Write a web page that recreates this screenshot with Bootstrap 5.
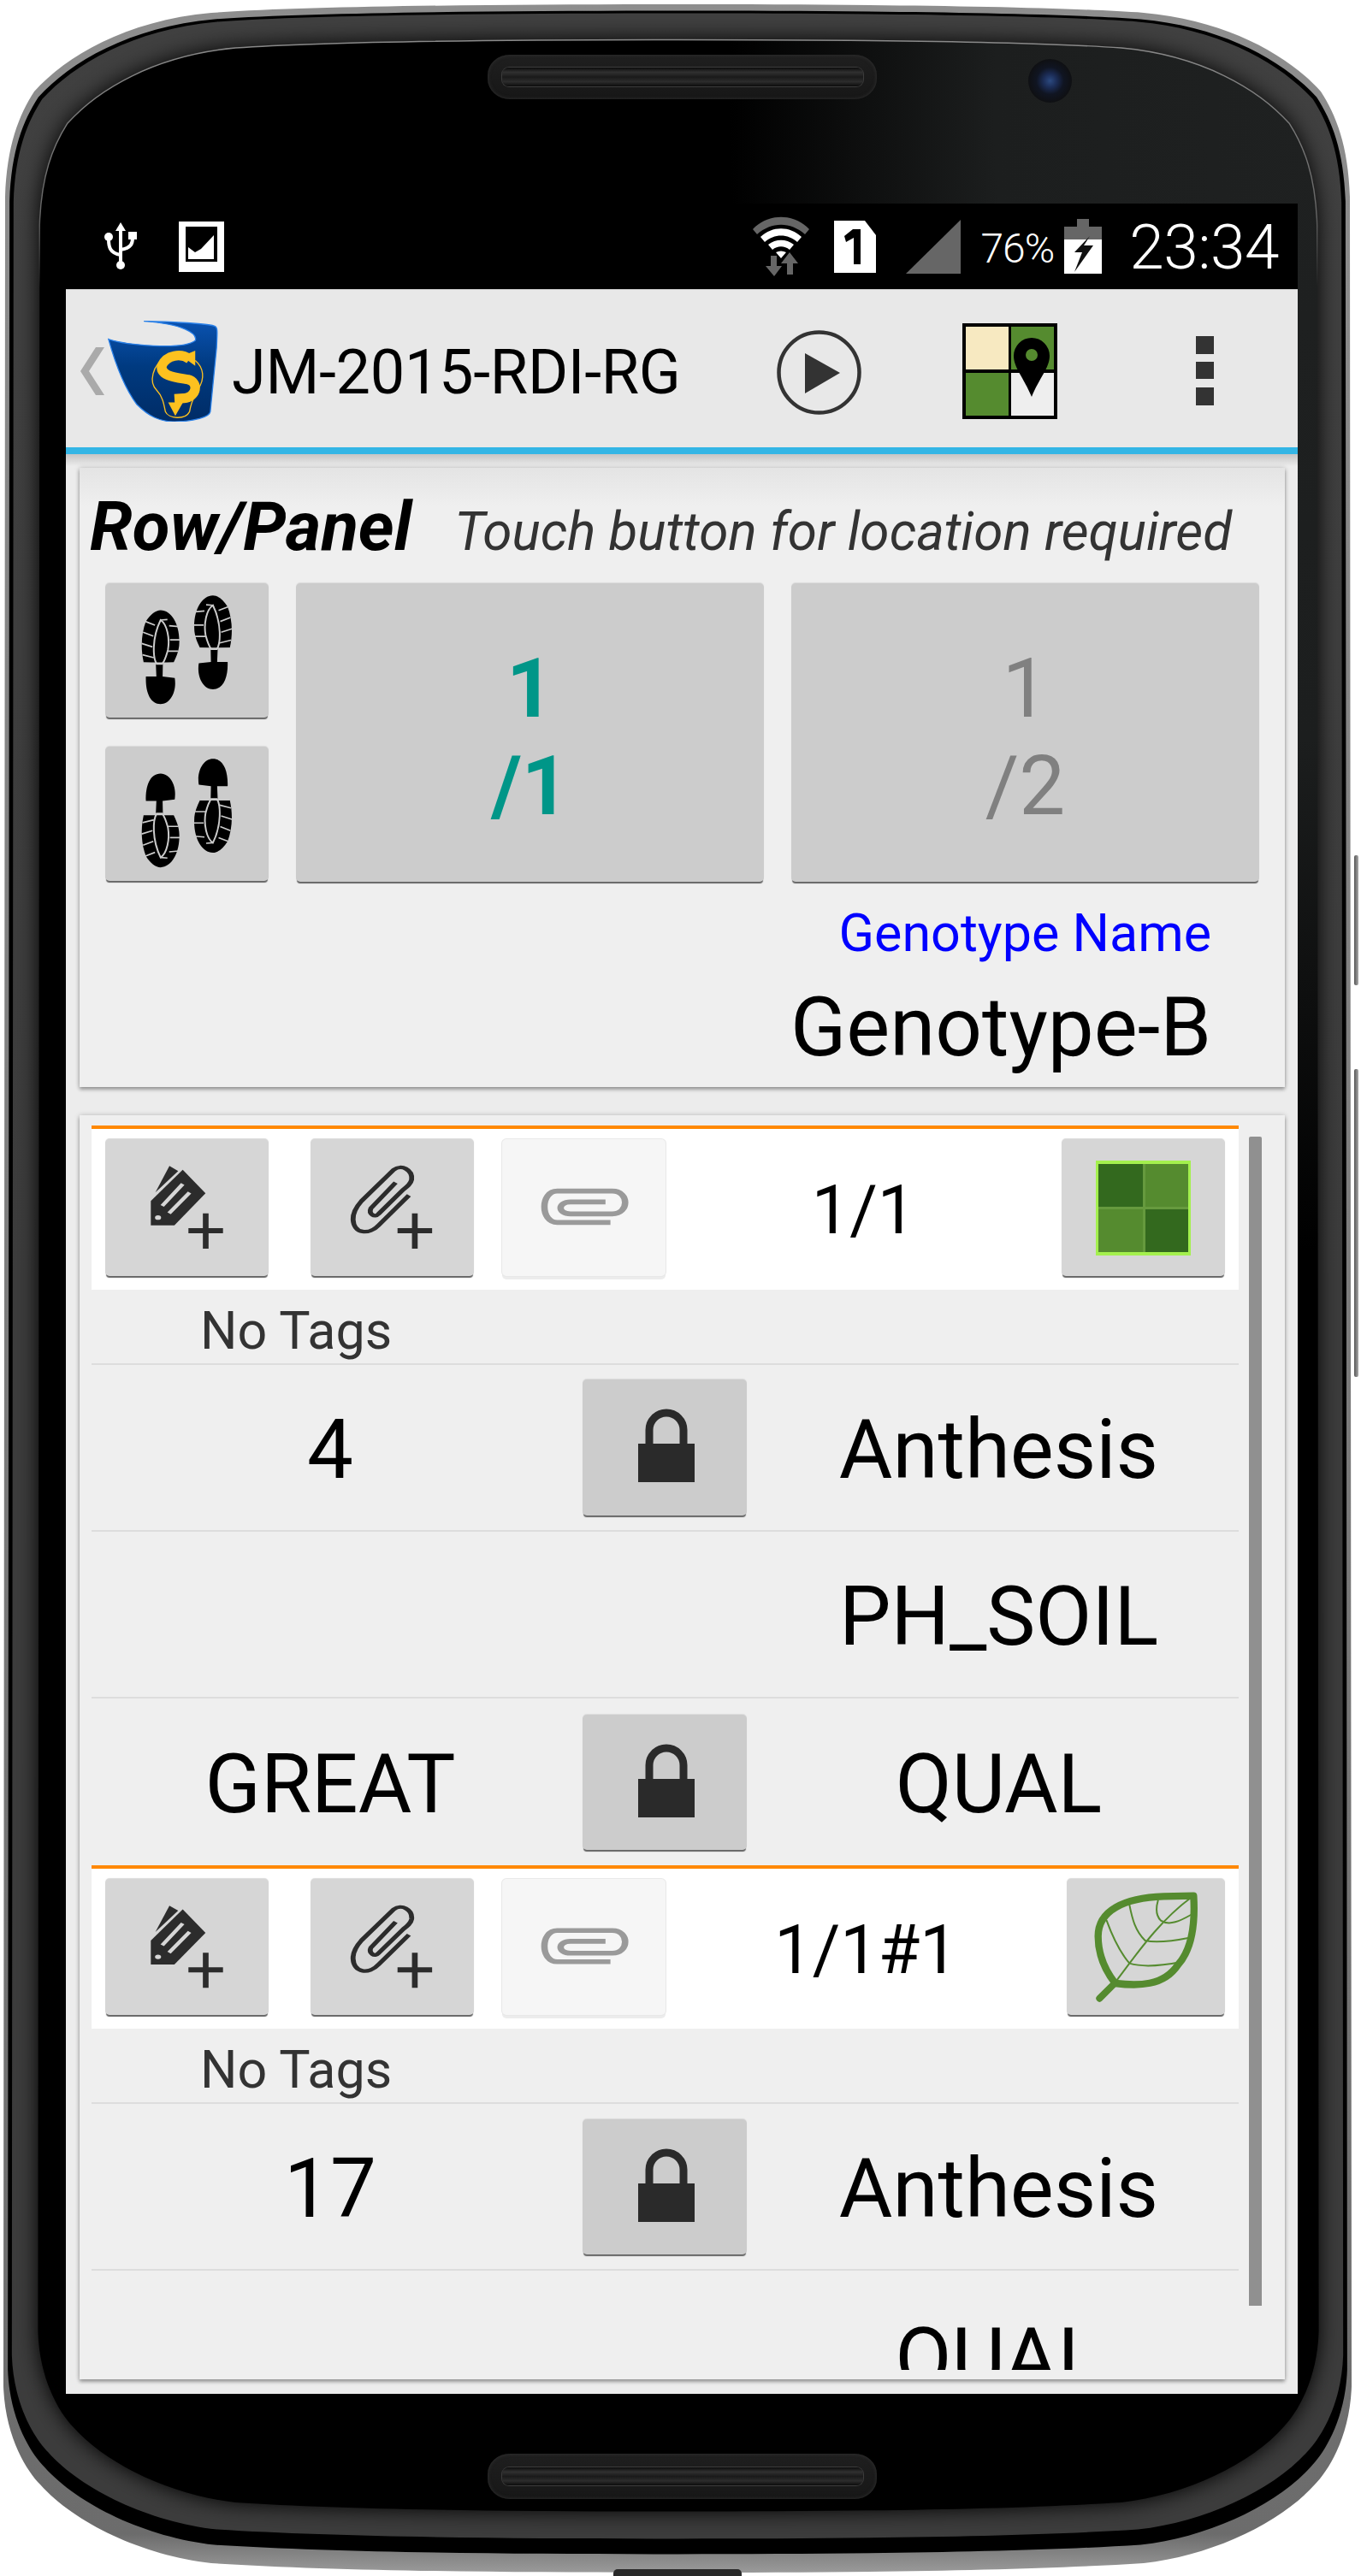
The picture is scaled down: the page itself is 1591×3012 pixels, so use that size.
<!DOCTYPE html>
<html lang="en"><head><meta charset="utf-8"><title>Field book</title>
<link href="https://cdn.jsdelivr.net/npm/bootstrap@5.3.0/dist/css/bootstrap.min.css" rel="stylesheet">
<style>
html,body{margin:0;background:#fff;}
body{font-family:Roboto,"Liberation Sans",sans-serif;width:1591px;height:3012px;overflow:hidden;}
.phone{position:relative;width:1591px;height:3012px;padding:238px 0 0 77px;}
.frame{position:absolute;left:0;top:0;}
.spk{position:absolute;left:570px;width:455px;border-radius:26px/24px;background:linear-gradient(#1f1f1f,#171717);box-shadow:inset 0 0 4px #333;display:flex;align-items:center;justify-content:center;}
.spk i{display:block;border-radius:8px;background:linear-gradient(#0c0c0c,#303030 25%,#1a1a1a 50%,#2c2c2c 75%,#0c0c0c);box-shadow:0 0 0 1px #3c3c3c;}
.spk-t{top:64px;height:52px;}.spk-t i{width:422px;height:22px;}
.spk-b{top:2869px;height:53px;}.spk-b i{width:422px;height:21px;}
.cam{position:absolute;left:1202px;top:69px;width:51px;height:51px;border-radius:50%;background:radial-gradient(circle,#2c4a80 0,#1b2c55 22%,#101522 44%,#0f1013 70%,#0b0b0b);}
.sidebtn{position:absolute;left:1583px;width:5px;background:linear-gradient(90deg,#555,#aaa);border-radius:2px;}
.vol{top:1000px;height:152px;}.pow{top:1250px;height:360px;}
.notch{position:absolute;left:717px;top:3004px;width:150px;height:8px;background:#2a2a2a;border-radius:5px 5px 0 0;}
.screen{position:relative;width:1440px;height:2561px;background:#000;display:flex;flex-direction:column;overflow:hidden;}
.status{height:100px;flex:none;color:#fff;display:flex;align-items:center;padding:0 22px 0 43px;}
.pct{font-size:48px;letter-spacing:-1px;line-height:1;margin:5px 12px 0 23px;font-weight:300;}
.clock{font-size:73px;line-height:1;margin-left:32px;margin-top:2px;letter-spacing:-.5px;font-weight:300;}
.abar{height:185px;flex:none;background:#e8e8e8;border-top:1px solid #ccc;display:flex;align-items:center;padding:5px 0 0 17px;}
.atitle{font-size:72px;line-height:1;color:#000;margin-left:16px;margin-top:4px;letter-spacing:-.3px;}
.bluebar{height:8px;flex:none;background:#33b5e5;}
.content{flex:1;background:linear-gradient(#c4c4c4,#ececec 14px);padding:16px 15px 0 16px;min-height:0;display:flex;flex-direction:column;}
.panel{background:#efefef;box-shadow:0 3px 4px rgba(0,0,0,.3),0 0 6px rgba(0,0,0,.2);}
.panel-a{height:724px;flex:none;padding:0 30px;background:linear-gradient(#e4e4e4,#efefef 45px);}
.panel-b{margin-top:33px;height:1478px;flex:none;position:relative;padding:12px 0 11px 14px;}
.hrow{height:135px;display:flex;align-items:baseline;margin-left:-18px;white-space:nowrap;padding-top:29px;}
.htitle{font-size:80px;font-weight:700;font-style:italic;color:#000;line-height:1;}
.hnote{font-size:62px;font-style:italic;color:#333;margin-left:50px;line-height:1;}
.tbtn.btn{background:#ccc;border:0;border-radius:5px;box-shadow:0 3px 1px -1px #666,0 -1px 1px #dadada;display:flex;align-items:center;justify-content:center;padding:0;flex:none;color:inherit;}
.tbtn.lite{background:#d6d6d6;}
.tbtn.faint{background:#f6f6f6;box-shadow:0 0 0 1px #e8e8e8,0 4px 0 0 #ececec;}
.sq{width:191px;height:157px;}
.stack{display:flex;flex-direction:column;gap:34px;width:191px;flex:none;}
.blk{display:flex;gap:32px;}
.tbtn.big{width:547px;height:349px;font-size:96px;line-height:114px;text-align:center;flex-direction:column;padding-top:10px;}
.big-on{color:#009688!important;font-weight:700;}
.big-off{color:#808080!important;}
.lblw{margin-top:25px;text-align:right;padding-right:56px;font-size:61px;color:#00f;line-height:70px;}
.genw{margin-top:20px;text-align:right;padding-right:56px;font-size:96px;color:#000;line-height:110px;}
.listw{width:1341px;height:1455px;overflow:hidden;}
.orange{height:4px;background:#f80;}
.whitebar{height:188px;background:#fff;display:flex;align-items:flex-start;padding:12px 16px 0;}
.wb2{height:187px;}
.whitebar .tbtn{height:160px;}
.wb2 .tbtn{height:159px;}
.w191{width:191px;}
.ml48{margin-left:49px;}.ml33{margin-left:33px;}
.w185{width:185px;}
.idt{font-size:79px;line-height:1;color:#000;flex:1;text-align:center;margin-top:44px;}
.tags{height:88px;font-size:61px;line-height:70px;color:#333;padding:13px 0 0 127px;border-bottom:2px solid #ddd;}
.rowx{border-bottom:2px solid #ddd;display:flex;align-items:center;font-size:96px;color:#000;line-height:1;}
.rowx .val{width:574px;text-align:center;padding:4px 16px 0 0;}
.rowx .tbtn{width:192px;}
.rowx .w191{width:192px;}
.rowx .nm{flex:1;text-align:center;padding:4px 0 0 14px;}
.r1{height:195px;}.r3{height:195px;border-bottom:0;}.r4{height:195px;}.r5{height:200px;border-bottom:0;}
.h159{height:159px;}.h158{height:158px;}
.sbar{position:absolute;left:1367px;top:25px;width:15px;height:1367px;background:#909090;border-radius:2px 2px 0 0;}
</style></head><body>
<div class="phone">
<svg class="frame" width="1591" height="3012" viewBox="0 0 1591 3012">
<defs>
<path id="body" d="M0,-1501 C205,-1501 435,-1499 545,-1491 C645,-1482 715,-1440 752,-1399 C770,-1371 784,-1336 786,-1276 L788,1284 C786,1344 760,1384 745,1399 C705,1444 625,1482 545,1491 C405,1500 205,1502 0,1502 C-205,1502 -405,1500 -545,1491 C-625,1482 -705,1444 -745,1399 C-760,1384 -786,1344 -788,1284 L-786,-1276 C-784,-1336 -770,-1371 -752,-1399 C-715,-1440 -645,-1482 -545,-1491 C-435,-1499 -205,-1501 0,-1501Z"/>
<linearGradient id="rim" x1="0" y1="0" x2="0" y2="1"><stop offset="0" stop-color="#8e8e8e"/><stop offset=".985" stop-color="#6c6c6c"/><stop offset="1" stop-color="#9a9a9a"/></linearGradient>
<linearGradient id="band" x1="0" y1="0" x2="0" y2="1"><stop offset="0" stop-color="#404040"/><stop offset=".5" stop-color="#3c3c3c"/><stop offset="1" stop-color="#3c3c3c"/></linearGradient>
<radialGradient id="face" cx="1" cy=".03" r=".46"><stop offset="0" stop-color="#1f2121"/><stop offset=".55" stop-color="#1c1e1e"/><stop offset="1" stop-color="#000"/></radialGradient>
<linearGradient id="fline" x1="0" y1="0" x2="0" y2="1"><stop offset="0" stop-color="#8a8a8a"/><stop offset=".07" stop-color="#666"/><stop offset=".1" stop-color="#666" stop-opacity="0"/></linearGradient>
<filter id="blr" x="-5%" y="-5%" width="110%" height="110%"><feGaussianBlur stdDeviation="13"/></filter>
</defs>
<use href="#body" fill="url(#rim)" transform="translate(792,1506)"/>
<use href="#body" fill="#000" transform="translate(792,1499) scale(.9935,.9903)"/>
<use href="#body" fill="url(#band)" transform="translate(792,1491.5) scale(.9875,.9833)"/>
<use href="#body" fill="#000" filter="url(#blr)" transform="translate(793,1491) scale(.95,.9624)"/>
<use href="#body" fill="url(#face)" stroke="url(#fline)" stroke-width="1.5" transform="translate(793,1491) scale(.95,.9624)"/>
</svg>
<div class="spk spk-t"><i></i></div><div class="cam"></div>
<div class="spk spk-b"><i></i></div>
<div class="sidebtn vol"></div><div class="sidebtn pow"></div><div class="notch"></div>

<div class="screen">
 <div class="status">
  <svg width="42" height="56" viewBox="0 0 42 56"><g fill="none" stroke="#fff" stroke-width="4"><path d="M21 8V50M21 38C8 36 7 28 7 20M21 32C34 30 35 24 35 18"/></g><path d="M21 0l6 10H15z" fill="#fff"/><circle cx="7" cy="17" r="5" fill="#fff"/><rect x="30" y="11" width="10" height="9" fill="#fff"/><circle cx="21" cy="50" r="5" fill="#fff"/></svg>
  <svg style="margin-left:47px" width="53" height="59" viewBox="0 0 53 59"><rect width="53" height="59" fill="#fff"/><rect x="8" y="6" width="37" height="41" fill="#000"/><path d="M11 44V30l8 6 7-4 15-16v28z" fill="#fff"/></svg>
  <div class="flex-grow-1"></div>
  <svg width="66" height="70" viewBox="0 0 66 70"><path d="M0 15C18-4 48-4 66 15l-5 6C44 6 22 6 5 21z" fill="#666"/><path d="M9 24c14-13 34-13 48 0l-5 6c-11-10-27-10-38 0zM18 33c9-7 21-7 30 0l-5 6c-6-5-14-5-20 0zM27 42c4-2 8-2 12 0l-6 7z" fill="#fff"/><path d="M21 46h7v12h6L25 70 15 58h6z" fill="#666"/><path d="M43 42l10 13h-6v13h-7V55h-7z" fill="#666"/></svg>
  <svg style="margin-left:29px" width="49" height="61" viewBox="0 0 49 61"><path d="M0 0h36l13 17v44H0z" fill="#fff"/><path d="M12 18l10-8h9v41h-8V20l-9 5z" fill="#000"/></svg>
  <svg style="margin-left:35px" width="64" height="63" viewBox="0 0 64 63"><path d="M64 0v63H0z" fill="#666"/></svg>
  <span class="pct">76%</span>
  <svg width="44" height="64" viewBox="0 0 44 64"><path d="M15 0h14v9h15v55H0V9h15z" fill="#666"/><path d="M0 24h44v40H0z" fill="#fff"/><path d="M30 20 12 39h9l-9 23 22-31H23l7-11z" fill="#111"/></svg>
  <span class="clock">23:34</span>
 </div>
 <div class="abar">
  <svg width="28" height="56" viewBox="0 0 28 56"><path d="M28 0 10 28l18 28H18L0 28 18 0z" fill="#aaa"/></svg>
  <svg style="margin-left:4px" width="129" height="118" viewBox="138 105 387 355">
   <defs><linearGradient id="cup" x1="0" y1="0" x2="0" y2="1"><stop offset="0" stop-color="#0a52b0"/><stop offset=".45" stop-color="#003a80"/><stop offset="1" stop-color="#002c66"/></linearGradient></defs>
   <path d="M140 170C200 190 400 210 445 175C455 150 400 115 265 107C350 108 500 115 515 125C525 130 522 150 520 200L498 425C495 445 440 458 380 460C320 462 280 440 240 400C195 340 165 260 140 170Z" fill="url(#cup)" stroke="#2a80e8" stroke-width="4"/>
   <g fill="none" stroke="#fdc11f"><path d="M340 238C295 260 280 320 310 350C330 370 335 400 340 425C350 450 410 455 425 425C430 390 440 375 455 345C480 310 475 270 445 245" stroke-width="4"/><path d="M425 240C395 218 345 225 328 262C318 300 380 305 420 312C458 322 452 372 405 378L372 380" stroke-width="34"/></g>
   <path d="M398 230 445 210V264zM350 392H402L375 440z" fill="#fdc11f"/>
  </svg>
  <span class="atitle">JM-2015-RDI-RG</span>
  <svg style="margin-left:112px;margin-top:3px" width="99" height="99" viewBox="0 0 99 99"><circle cx="49.5" cy="49.5" r="47" fill="none" stroke="#333" stroke-width="4.5"/><path d="M33 27 74 50 33 74z" fill="#333"/></svg>
  <svg style="margin-left:118px" width="111" height="112" viewBox="0 0 111 112"><rect width="111" height="112" fill="#000"/><rect x="4" y="4" width="50" height="50" fill="#f7e9c1"/><rect x="57" y="4" width="50" height="50" fill="#558b2f"/><rect x="4" y="58" width="50" height="50" fill="#558b2f"/><rect x="57" y="58" width="50" height="50" fill="#eee"/><path d="M81 86C72 64 60 52 60 38a21 21 0 0 1 42 0C102 52 90 64 81 86Z" fill="#000"/><circle cx="81" cy="37" r="7" fill="#558b2f"/></svg>
  <svg style="margin-left:162px" width="21" height="81" viewBox="0 0 21 81"><path d="M0 0h21v21H0zM0 30h21v20H0zM0 60h21v21H0z" fill="#333"/></svg>
 </div>
 <div class="bluebar"></div>
 <div class="content">
  <div class="card rounded-0 border-0 panel panel-a">
   <div class="hrow"><span class="htitle">Row/Panel</span><span class="hnote">Touch button for location required</span></div>
   <div class="blk">
    <div class="stack">
     <button class="btn tbtn sq"><svg width="191" height="157" viewBox="38 5 574 475">
      <defs><g id="shoe">
       <path d="M232 100C270 100 300 150 298 215C298 245 285 270 278 285L240 287 239 335 282 340C290 390 265 432 232 432C195 432 178 390 180 335L217 335 215 287 172 285C160 230 165 180 180 140C195 115 215 100 232 100Z" fill="#000"/>
       <path d="M232 135C255 150 265 200 258 240C250 270 242 285 238 290H218C205 270 200 200 232 135Z" fill="#000" stroke="#ccc" stroke-width="6"/>
       <path d="M178 140 212 153M170 178 206 192M165 218 203 230M168 258 208 268M256 133 232 135M262 155 296 158M265 205 300 205M258 245 295 245M172 287H278" stroke="#ccc" stroke-width="5" fill="none"/>
      </g></defs>
      <use href="#shoe"/><use href="#shoe" transform="translate(649,-52) scale(-1,1)"/></svg></button>
     <button class="btn tbtn sq"><svg width="191" height="157" viewBox="38 5 574 475">
      <use href="#shoe" transform="translate(0,532) scale(1,-1)"/><use href="#shoe" transform="translate(649,480) scale(-1,-1)"/></svg></button>
    </div>
    <button class="btn tbtn big big-on"><span>1</span><span>/1</span></button>
    <button class="btn tbtn big big-off"><span>1</span><span>/2</span></button>
   </div>
   <div class="lblw">Genotype Name</div>
   <div class="genw">Genotype-B</div>
  </div>
  <div class="card rounded-0 border-0 panel panel-b">
   <div class="listw">
    <div class="orange"></div>
    <div class="whitebar">
     <button class="btn tbtn lite w191"><svg width="191" height="160" viewBox="28 38 430 480" preserveAspectRatio="none"><use href="#tagic"/></svg></button>
     <button class="btn tbtn lite w191 ml48"><svg width="191" height="160" viewBox="28 38 430 480" preserveAspectRatio="none"><use href="#clipic"/></svg></button>
     <button class="btn tbtn faint w191 ml33"><svg width="191" height="160" viewBox="1070 38 430 480" preserveAspectRatio="none"><use href="#filic"/></svg></button>
     <span class="idt">1/1</span>
     <button class="btn tbtn lite w191"><svg width="111" height="111" viewBox="0 0 111 111"><rect width="111" height="111" fill="#a4f04e"/><rect x="3" y="4" width="52" height="50" fill="#33691e"/><rect x="58" y="4" width="50" height="50" fill="#558b2f"/><rect x="3" y="57" width="52" height="50" fill="#558b2f"/><rect x="58" y="57" width="50" height="50" fill="#33691e"/><path d="M55 4h3v103h-3zM3 54h105v3H3z" fill="#669a3e"/></svg></button>
    </div>
    <div class="tags">No Tags</div>
    <div class="rowx r1"><div class="val">4</div><button class="btn tbtn h159"><svg width="191" height="159" viewBox="0 0 191 159"><use href="#lockic"/></svg></button><div class="nm">Anthesis</div></div>
    <div class="rowx r1"><div class="val"></div><div class="w191"></div><div class="nm">PH_SOIL</div></div>
    <div class="rowx r3"><div class="val">GREAT</div><button class="btn tbtn h158"><svg width="191" height="158" viewBox="0 0 191 158"><use href="#lockic"/></svg></button><div class="nm">QUAL</div></div>
    <div class="orange"></div>
    <div class="whitebar wb2">
     <button class="btn tbtn lite w191"><svg width="191" height="159" viewBox="28 38 430 480" preserveAspectRatio="none"><use href="#tagic"/></svg></button>
     <button class="btn tbtn lite w191 ml48"><svg width="191" height="159" viewBox="28 38 430 480" preserveAspectRatio="none"><use href="#clipic"/></svg></button>
     <button class="btn tbtn faint w191 ml33"><svg width="191" height="159" viewBox="1070 38 430 480" preserveAspectRatio="none"><use href="#filic"/></svg></button>
     <span class="idt">1/1#1</span>
     <button class="btn tbtn lite w185"><svg width="185" height="159" viewBox="80 20 555 475"><g fill="none" stroke="#558b2f" stroke-linecap="round" stroke-linejoin="round"><path d="M250 385C215 340 190 290 190 220C190 130 280 85 420 80L525 78C530 160 525 260 470 320C420 395 330 395 250 385Z" stroke-width="25"/><path d="M195 438 245 388" stroke-width="24"/><path d="M255 375C320 290 400 170 515 85M220 165C240 220 270 280 300 315C350 330 430 320 480 310M300 110C310 160 320 200 355 235C400 245 460 235 510 225M400 95C390 130 395 150 410 165C440 185 480 165 515 145" stroke-width="6"/></g></svg></button>
    </div>
    <div class="tags">No Tags</div>
    <div class="rowx r4"><div class="val">17</div><button class="btn tbtn h158"><svg width="191" height="158" viewBox="0 0 191 158"><use href="#lockic"/></svg></button><div class="nm">Anthesis</div></div>
    <div class="rowx r5"><div class="val"></div><div class="w191"></div><div class="nm">QUAL</div></div>
   </div>
   <div class="sbar"></div>
   <svg width="0" height="0" class="position-absolute"><defs>
    <g id="lockic"><path d="M64 75h66v45H64z" fill="#2a2a2a"/><path d="M77 76V59a20 20 0 0 1 40 0V76" fill="none" stroke="#2a2a2a" stroke-width="9"/></g>
    <g id="tagic" fill="#2c2c2c"><path d="M232 145 292 228 210 340H148V255Z"/><path d="M197 132 220 150 160 225Z"/><path d="M232 195 178 272M250 225 196 298" stroke="#d6d6d6" stroke-width="11"/><circle cx="167" cy="313" r="8" fill="#d6d6d6"/><path d="M285 298h15v124h-15zM247 350h91v18h-91z"/></g>
    <g id="clipic"><path d="M825 235 745 340C720 375 680 370 678 320C677 295 690 270 700 255L785 145C805 125 835 145 832 180C830 195 820 205 810 215L745 300C735 315 718 300 725 280L790 190" transform="translate(-538,0)" fill="none" stroke="#2c2c2c" stroke-width="13"/><path d="M295 298h15v124h-15zM257 350h91v18h-91z" fill="#2c2c2c"/></g>
    <g id="filic"><path d="M1355 330H1215C1170 330 1170 220 1215 220H1360C1405 220 1405 300 1360 300H1250C1215 300 1215 258 1250 258H1342" fill="none" stroke="#9a9a9a" stroke-width="17"/></g>
   </defs></svg>
  </div>
 </div>
</div>
</div>
</body></html>
